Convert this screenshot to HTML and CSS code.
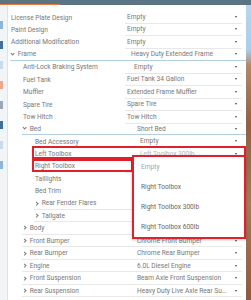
FILE: index.html
```html
<!DOCTYPE html>
<html lang="en">
<head>
  <meta charset="UTF-8" />
  <title>Vehicle Options</title>
  <link rel="stylesheet" href="styles.css">
</head>
<body>
  <div class="topbar"><span class="accent"></span></div>
  <div class="main">
    <div class="side">
      <span class="chip c1"></span>
      <span class="chip c2"></span>
      <span class="chip c3"></span>
      <span class="chip c4"></span>
      <span class="chip c5"></span>
      <span class="chip c2"></span>
      <span class="chip c3"></span>
      <span class="chip c1"></span>
    </div>

    <div class="panel">
      <div class="row"><div class="label l0">License Plate Design</div><div class="value">Empty</div></div>
      <div class="row"><div class="label l0">Paint Design</div><div class="value">Empty</div></div>
      <div class="row"><div class="label l0">Additional Modification</div><div class="value">Empty</div></div>
      <div class="row open g0"><div class="label l0"><i class="chev down"></i>Frame</div><div class="value v-g0">Heavy Duty Extended Frame</div></div>
      <div class="row"><div class="label l1">Anti-Lock Braking System</div><div class="value v-sub">Empty</div></div>
      <div class="row"><div class="label l1">Fuel Tank</div><div class="value">Fuel Tank 34 Gallon</div></div>
      <div class="row"><div class="label l1">Muffler</div><div class="value">Extended Frame Muffler</div></div>
      <div class="row"><div class="label l1">Spare Tire</div><div class="value">Spare Tire</div></div>
      <div class="row"><div class="label l1">Tow Hitch</div><div class="value">Tow Hitch</div></div>
      <div class="row open g1"><div class="label l1"><i class="chev down"></i>Bed</div><div class="value v-g1">Short Bed</div></div>
      <div class="row"><div class="label l2">Bed Accessory</div><div class="value v-l2">Empty</div></div>
      <div class="row"><div class="label l2">Left Toolbox</div><div class="value v-l2 faded">Left Toolbox 300lb</div></div>
      <div class="row"><div class="label l2">Right Toolbox</div><div class="value v-l2"></div></div>
      <div class="row plain"><div class="label l2">Taillights</div></div>
      <div class="row plain"><div class="label l2">Bed Trim</div></div>
      <div class="row closed c2"><div class="label l2"><i class="chev"></i>Rear Fender Flares</div></div>
      <div class="row closed c2"><div class="label l2"><i class="chev"></i>Tailgate</div></div>
      <div class="row closed c1"><div class="label l1"><i class="chev"></i>Body</div><div class="value v-g1"></div></div>
      <div class="row closed c1"><div class="label l1"><i class="chev"></i>Front Bumper</div><div class="value v-g1">Chrome Front Bumper</div></div>
      <div class="row closed c1"><div class="label l1"><i class="chev"></i>Rear Bumper</div><div class="value v-g1">Chrome Rear Bumper</div></div>
      <div class="row closed c1"><div class="label l1"><i class="chev"></i>Engine</div><div class="value v-g1">6.0L Diesel Engine</div></div>
      <div class="row closed c1"><div class="label l1"><i class="chev"></i>Front Suspension</div><div class="value v-g1">Beam Axle Front Suspension</div></div>
      <div class="row closed c1"><div class="label l1"><i class="chev"></i>Rear Suspension</div><div class="value v-g1">Heavy Duty Live Axle Rear Su...</div></div>

      <div class="mark mark-left"></div>
      <div class="mark mark-right"></div>
      <ul class="menu">
        <li class="empty">Empty</li>
        <li>Right Toolbox</li>
        <li>Right Toolbox 300lb</li>
        <li>Right Toolbox 600lb</li>
      </ul>
    </div>

    <div class="scenery"></div>
  </div>
</body>
</html>
```

FILE: styles.css
```css
html, body {
  margin: 0;
  padding: 0;
  width: 251px;
  height: 300px;
  overflow: hidden;
  background: #fff;
  font-family: Roboto, "Liberation Sans", sans-serif;
  font-size: 6.6px;
  color: #777;
}
.topbar {
  height: 5px;
  background: #5b7484;
  position: relative;
}
.topbar .accent {
  display: block;
  position: absolute;
  left: 0;
  bottom: 0;
  width: 60px;
  height: 1px;
  background: #e9793b;
}
.main {
  display: flex;
  height: 295px;
}
.side {
  width: 7px;
  background: #f2f5f7;
  border-right: 1px solid #dde3e8;
  display: flex;
  flex-direction: column;
  gap: 12px;
  padding-top: 16px;
}
.chip {
  display: block;
  width: 3px;
  height: 8px;
}
.chip.c1 { background: #8fb6d8; }
.chip.c2 { background: #3f6f9c; }
.chip.c3 { background: #c9dbea; }
.chip.c4 { background: #f0a58c; }
.chip.c5 { background: #9aa9b5; }

.panel {
  width: 238px;
  padding-top: 6px;
  position: relative;
}
.scenery {
  flex: 1;
  background: linear-gradient(#b7d6ee 0, #a9cdea 45px, #b08a6c 60px, #8e6048 120px, #a7795a 200px, #8a5a44 295px);
}

.row {
  display: grid;
  grid-template-columns: 117px 1fr;
  height: 12.45px;
  align-items: center;
  line-height: 12px;
  white-space: nowrap;
}
.label {
  overflow: hidden;
}
.l0 { padding-left: 3px; }
.l1 { padding-left: 15px; }
.l2 { padding-left: 27px; }
.value {
  height: 100%;
  padding-left: 2px;
  padding-right: 8px;
  border-bottom: 1px solid #e8e8e8;
  box-sizing: border-box;
  position: relative;
  margin-right: 4px;
}
.value::after {
  content: "";
  position: absolute;
  right: 5px;
  top: 5px;
  border-left: 1.6px solid transparent;
  border-right: 1.6px solid transparent;
  border-top: 2px solid #444;
}
.v-g0 { padding-left: 6px; }
.v-sub { padding-left: 9px; }
.v-g1 { padding-left: 12px; }
.v-l2 { padding-left: 15px; }
.faded { color: #b5b5b5; }

.row.open .label,
.row.open .value {
  height: 100%;
  box-sizing: border-box;
}
.row.g0 {
  box-shadow: inset 0 -1px 0 #b3cde3;
  margin-left: 2px;
  grid-template-columns: 115px 1fr;
}
.row.g0 .label { padding-left: 1px; }
.row.g1 {
  box-shadow: inset 0 -1px 0 #b3cde3;
  margin-left: 14px;
  grid-template-columns: 103px 1fr;
}
.row.g1 .label { padding-left: 1px; }
.row.open .value { border-bottom: 0; }

.row.closed.c1 {
  border-bottom: 1px solid #e8e8e8;
  margin-left: 14px;
  margin-right: 4px;
  grid-template-columns: 103px 1fr;
  box-sizing: border-box;
}
.row.closed.c1 .label { padding-left: 1px; }
.row.closed.c1 .value { border-bottom: 0; margin-right: 0; }
.row.closed.c2 {
  border-bottom: 1px solid #e8e8e8;
  margin-left: 26px;
  margin-right: 4px;
  box-sizing: border-box;
}
.row.closed.c2 .label { padding-left: 1px; }

.chev {
  display: inline-block;
  width: 2.2px;
  height: 2.2px;
  border-right: 0.8px solid #777;
  border-bottom: 0.8px solid #777;
  transform: rotate(-45deg);
  margin-right: 3.5px;
  vertical-align: 0.5px;
}
.chev.down {
  transform: rotate(45deg);
  vertical-align: 1.5px;
}

/* red highlight boxes drawn over the rows */
.mark {
  position: absolute;
  border: 2px solid #e0202a;
  box-sizing: border-box;
}
.mark-left {
  left: 24px;
  top: 141px;
  width: 214px;
  height: 13px;
}
.mark-right {
  left: 24px;
  top: 154px;
  width: 101px;
  height: 13px;
}

.menu {
  position: absolute;
  left: 124px;
  top: 150px;
  width: 114px;
  height: 84px;
  margin: 0;
  padding: 0;
  list-style: none;
  background: #fff;
  border: 2px solid #e0202a;
  box-sizing: border-box;
  box-shadow: 0 1px 3px rgba(0, 0, 0, 0.2);
}
.menu li {
  height: 20px;
  line-height: 20px;
  padding-left: 7px;
  color: #666;
}
.menu li.empty {
  color: #9aa4aa;
}
```
